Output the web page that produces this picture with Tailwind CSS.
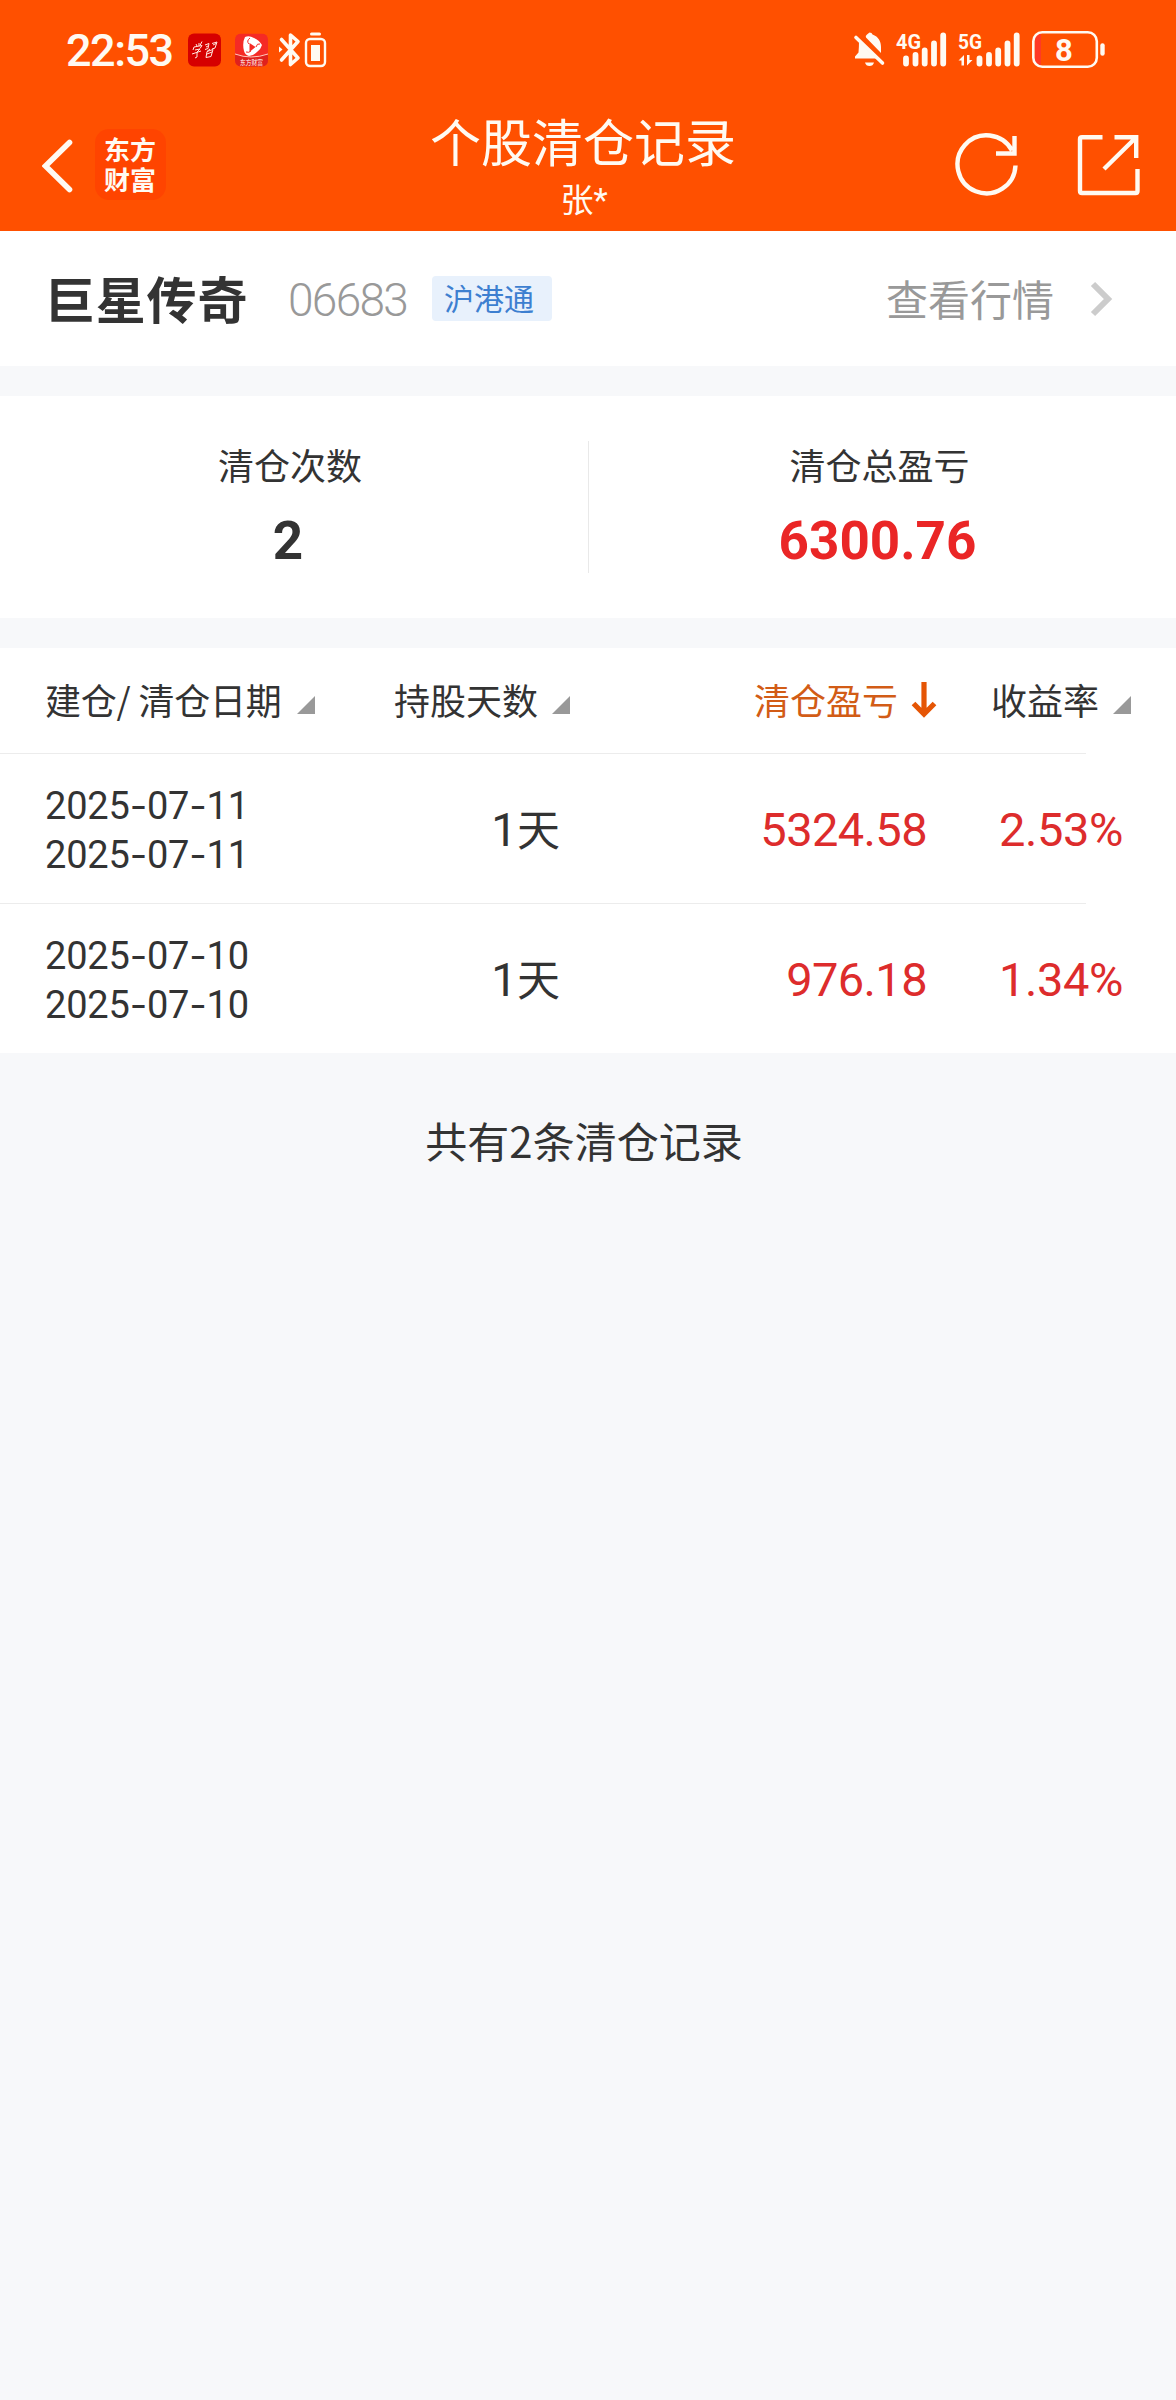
<!DOCTYPE html>
<html lang="zh-CN">
<head>
<meta charset="utf-8">
<title>个股清仓记录</title>
<script src="https://cdn.jsdelivr.net/npm/@tailwindcss/browser@4"></script>
</head>
<body class="w-[1176px] min-h-[2400px] bg-[#f7f8fa] text-[#333] font-['Noto_Sans_CJK_SC',sans-serif]">

<header class="h-[231px] bg-[#ff5000] text-[#fffaf2]">
  <!-- status bar -->
  <div class="h-[100px] flex items-center justify-between pl-[66px] pr-[70px]">
    <div class="flex items-center">
      <span class="w-[122px] text-[45px] leading-[62px] h-[60px] font-[Roboto,sans-serif] font-medium tracking-[-1.500px] whitespace-nowrap">22:53</span>
      <svg class="w-[33px] h-[34px]" viewBox="0 0 33 34"><rect y=".5" width="33" height="33" rx="6" fill="#d60000"/><g fill="none" stroke="#ffe9e0" stroke-width="1"><path d="M8 11l1 2M11 10v3M14 8.500l-2 4M5 17l1-3 8-1.500-2 3M7 17l5-1-3 3v5l-2 1M4 21l9-3"/><path d="M17 12l4-1.500-1 5-3 1M18 14l2-1M24 10.500l5-1.500-2 6-3 1M25 12l3-1.500M22 16l-3 2.500M19 18.500l6-2-2 7-5 1zM19 21l5-2"/></g></svg>
      <svg class="w-[33px] h-[34px] ml-[14px]" viewBox="0 0 33 34"><defs><clipPath id="b"><rect y=".5" width="33" height="33" rx="6"/></clipPath></defs><g clip-path="url(#b)"><rect y=".5" width="33" height="33" fill="#f52a25"/><path d="M0 21Q16 27 33 21V34H0z" fill="#df211d"/><path d="M0 21Q16 27 33 21" fill="none" stroke="#ffc9bb" stroke-width="1"/><path d="M10 4q4-2 9 1 5 2 8 7-1 4-5 7-4 4-8 4-4-1-5-5-2-8 1-14z" fill="#fff"/><path d="M14.500 10l6 4-6 5z" fill="#f52a25"/><path d="M15 5q-4 3-1 6M25 11q-3-1-4 3M11 19q3 1 5-1" stroke="#f52a25" fill="none"/></g><text x="16.500" y="31.500" font-size="6.500" text-anchor="middle" fill="#fff" textLength="23" lengthAdjust="spacingAndGlyphs">东方财富</text></svg>
      <svg class="w-[50px] h-[36px] ml-[10px]" viewBox="278 32 50 36" fill="none" stroke="currentColor"><path d="M281.500 39.500L298 58l-7.500 6.500V35L298 41.500 281.500 60" stroke-width="3.600" stroke-linecap="round" stroke-linejoin="round"/><path d="M279 46.500l3.500 3-3.500 3z" fill="currentColor" stroke="none"/><rect x="306" y="39" width="19" height="27" rx="4" stroke-width="2.400"/><rect x="311" y="45" width="9" height="16" fill="currentColor" stroke="none"/><path d="M311.500 33.900h8" stroke-width="3" stroke-linecap="round"/></svg>
    </div>
    <svg class="w-[254px] h-[40px]" viewBox="852 30 254 40" fill="none" stroke="currentColor">
      <path d="M869.500 32.500q2.500 0 3 2c6 2 8.500 7 8.500 12.500v6l-15-15.500q-1-1.500 1-3zM859 42l17.500 16.500H855v-2l3.500-4q.5-6 .5-10.500zM865 62.500h9q-1 3.500-4.500 3.500t-4.500-3.500z" fill="currentColor" stroke="none"/>
      <path d="M856 37.500L882.500 63" stroke-width="3.600" stroke-linecap="round"/>
      <g stroke-width="5.800" stroke-linecap="round"><path d="M906 58.500v5M915.500 55v8.500M924.700 50.500v13M934 43.500v20M943.200 35.500v28M979.500 58.500v5M989 55v8.500M998.200 50.500v13M1007.500 43.500v20M1016.700 35.500v28"/></g>
      <g fill="currentColor" stroke="none" font-size="21" font-weight="700" font-family="Roboto,sans-serif"><text x="896" y="49" textLength="25" lengthAdjust="spacingAndGlyphs">4G</text><text x="958" y="49" textLength="24" lengthAdjust="spacingAndGlyphs">5G</text><path d="M958.500 60.500l5.500-5.500v10.500h-2.500v-5zM972.500 60l-5.500 5.500V55h2.500v5z"/></g>
      <path d="M1035 37q2-3 6-3v31q-4 0-6-3z" fill="#ff3a26" stroke="none"/>
      <rect x="1033.300" y="32.300" width="63.500" height="34.500" rx="9" stroke-width="2.600"/>
      <path d="M1102.500 45.500v8" stroke-width="4.400" stroke-linecap="round"/>
      <text x="1064" y="60.500" font-size="31" font-weight="700" font-family="Roboto,sans-serif" text-anchor="middle" fill="currentColor" stroke="none">8</text>
    </svg>
  </div>
  <!-- title bar -->
  <div class="h-[131px] grid grid-cols-[431px_304px_1fr]">
    <div class="flex items-start pl-[42px] pt-[29px]">
      <svg class="w-[31px] h-[56px] mt-[9px]" viewBox="42 138 31 56" fill="none" stroke="currentColor" stroke-width="5.600" stroke-linecap="round"><path d="M69.500 142.500L45.500 166 69.500 189.500"/></svg>
      <div class="w-[71px] h-[71px] ml-[22px] rounded-[14px] bg-[#ff4400] pt-[5px] pr-[1px] text-[26px] leading-[30px] font-bold text-center">东方<br>财富</div>
    </div>
    <div class="text-center pt-[10px] -ml-[8px] -mr-[8px]">
      <h1 class="text-[51px] leading-[60px] font-normal whitespace-nowrap">个股清仓记录</h1>
      <p class="text-[33px] leading-[40px] mt-[8px] pl-[2px]">张<span class="font-[Roboto,sans-serif] leading-none">*</span></p>
    </div>
    <div class="pl-[219px] pt-[30px] flex items-start">
      <svg class="w-[190px] h-[68px]" viewBox="954 130 190 68" fill="none" stroke="currentColor" stroke-width="4.400"><path d="M1015.500 165.500a29 29 0 1 1-3.500-15M1014.500 136v17.500H996"/><path d="M1102.500 137.200H1082q-2 0-2 2V191q0 2 2 2h53.500q2 0 2-2v-22M1114.500 137.200h21.700v20.800M1136 137.500L1104 169"/></svg>
    </div>
  </div>
</header>

<section class="h-[135px] bg-white flex items-center pl-[45px] pr-[62px] pb-[4px]">
  <h2 class="w-[203px] text-[50px] leading-[60px] tracking-[0.800px] font-bold whitespace-nowrap">巨星传奇</h2>
  <span class="w-[120px] ml-[40px] pt-[7px] text-[46px] leading-[60px] font-[Roboto,sans-serif] font-[350] tracking-[-1.700px] text-[#999]">06683</span>
  <span class="w-[120px] h-[45px] ml-[24px] mt-[4px] rounded-[4px] bg-[#e8f1fc] text-[#3d7fd0] text-[30px] leading-[43px] pl-[12px]">沪港通</span>
  <span class="ml-auto pt-[2px] text-[42px] leading-[60px] text-[#999]">查看行情</span>
  <svg class="w-[24px] h-[36px] ml-[36px] mt-[4px]" viewBox="0 0 24 36" fill="none" stroke="#ccc" stroke-width="6"><path d="M3 3L18 18 3 33"/></svg>
</section>

<section class="h-[222px] mt-[30px] bg-white grid grid-cols-2 pt-[45px] text-center">
  <div class="h-[132px] pr-[8px]">
    <p class="text-[36px] leading-[46px]">清仓次数</p>
    <p class="text-[53px] leading-[60px] mt-[24px] font-[Roboto,sans-serif] font-bold pr-[4px]">2</p>
  </div>
  <div class="h-[132px] border-l border-[#e9e9e9] pr-[6px]">
    <p class="text-[36px] leading-[46px]">清仓总盈亏</p>
    <p class="text-[53px] leading-[60px] mt-[24px] font-[Roboto,sans-serif] font-bold pr-[4px] text-[#ea2626]">6300.76</p>
  </div>
</section>

<main class="mt-[30px] bg-white">
  <div class="h-[105px] flex items-center text-[36px] leading-[50px] pl-[45px] pb-[3px] whitespace-nowrap">
    <div class="w-[349px] flex items-end"><span class="tracking-[-0.200px]">建仓/ 清仓日期</span><svg class="w-[18px] h-[18px] ml-[15px] mb-[10px]" viewBox="0 0 18 18"><path d="M0 18L18 0v18z" fill="#999"/></svg></div>
    <div class="w-[360px] flex items-end">持股天数<svg class="w-[18px] h-[18px] ml-[14px] mb-[10px]" viewBox="0 0 18 18"><path d="M0 18L18 0v18z" fill="#999"/></svg></div>
    <div class="w-[237px] flex items-center text-[#d25c16]">清仓盈亏<svg class="w-[26px] h-[36px] ml-[13px] mt-[2px]" viewBox="0 0 26 36" fill="none" stroke="#e55505" stroke-width="5.200"><path d="M13 0v32M2.500 21.500L13 32l10.500-10.500"/></svg></div>
    <div class="flex items-end">收益率<svg class="w-[18px] h-[18px] ml-[14px] mb-[10px]" viewBox="0 0 18 18"><path d="M0 18L18 0v18z" fill="#999"/></svg></div>
  </div>
  <div class="w-[1086px] h-px bg-[#ececec]"></div>
  <div class="h-[149px] flex items-center pl-[45px] pb-[5px] text-[43px] leading-[60px]">
    <div class="w-[300px] pt-[9px] text-[38px] leading-[49px] tracking-[-0.200px] font-[Roboto,sans-serif]">2025<span class="font-[Inter] leading-none">-</span>07<span class="font-[Inter] leading-none">-</span>11<br>2025<span class="font-[Inter] leading-none">-</span>07<span class="font-[Inter] leading-none">-</span>11</div>
    <div class="w-[215px] pt-[1px] text-right"><span class="text-[46px] leading-none font-[Roboto,sans-serif]">1</span>天</div>
    <div class="w-[367px] pt-[8px] text-right text-[47px] tracking-[-0.600px] font-[Roboto,sans-serif] text-[#dd2c2c]">5324.58</div>
    <div class="w-[196px] pt-[8px] text-right text-[47px] tracking-[-0.400px] font-[Roboto,sans-serif] text-[#dd2c2c]">2.53%</div>
  </div>
  <div class="w-[1086px] h-px bg-[#ececec]"></div>
  <div class="h-[149px] flex items-center pl-[45px] pb-[5px] text-[43px] leading-[60px]">
    <div class="w-[300px] pt-[9px] text-[38px] leading-[49px] tracking-[-0.200px] font-[Roboto,sans-serif]">2025<span class="font-[Inter] leading-none">-</span>07<span class="font-[Inter] leading-none">-</span>10<br>2025<span class="font-[Inter] leading-none">-</span>07<span class="font-[Inter] leading-none">-</span>10</div>
    <div class="w-[215px] pt-[1px] text-right"><span class="text-[46px] leading-none font-[Roboto,sans-serif]">1</span>天</div>
    <div class="w-[367px] pt-[8px] text-right text-[47px] tracking-[-0.600px] font-[Roboto,sans-serif] text-[#dd2c2c]">976.18</div>
    <div class="w-[196px] pt-[8px] text-right text-[47px] tracking-[-0.400px] font-[Roboto,sans-serif] text-[#dd2c2c]">1.34%</div>
  </div>
</main>

<p class="pt-[57px] pr-[8px] text-center text-[42px] leading-[60px]">共有2条清仓记录</p>
</body>
</html>
